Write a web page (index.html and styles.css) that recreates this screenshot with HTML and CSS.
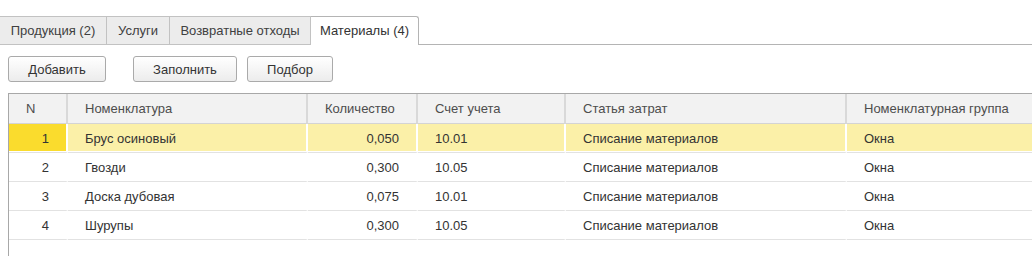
FILE: index.html
```html
<!DOCTYPE html>
<html lang="ru">
<head>
<meta charset="utf-8">
<link rel="stylesheet" href="styles.css">
</head>
<body>
<div class="page">
  <div class="tabs">
    <div class="tab t1">Продукция (2)</div>
    <div class="tab t2">Услуги</div>
    <div class="tab t3">Возвратные отходы</div>
    <div class="tab active t4">Материалы (4)</div>
    <div class="tab-rest"></div>
  </div>
  <div class="toolbar">
    <button class="btn b1">Добавить</button>
    <button class="btn b2">Заполнить</button>
    <button class="btn b3">Подбор</button>
  </div>
  <div class="grid-wrap">
    <table class="grid">
      <colgroup>
        <col class="c-n"><col class="c-nom"><col class="c-qty"><col class="c-acc"><col class="c-cost"><col class="c-grp">
      </colgroup>
      <thead>
        <tr>
          <th class="n">N</th>
          <th>Номенклатура</th>
          <th>Количество</th>
          <th>Счет учета</th>
          <th>Статья затрат</th>
          <th>Номенклатурная группа</th>
        </tr>
      </thead>
      <tbody>
        <tr class="sel">
          <td class="num">1</td><td>Брус осиновый</td><td class="qty">0,050</td><td>10.01</td><td>Списание материалов</td><td>Окна</td>
        </tr>
        <tr>
          <td class="num">2</td><td>Гвозди</td><td class="qty">0,300</td><td>10.05</td><td>Списание материалов</td><td>Окна</td>
        </tr>
        <tr>
          <td class="num">3</td><td>Доска дубовая</td><td class="qty">0,075</td><td>10.01</td><td>Списание материалов</td><td>Окна</td>
        </tr>
        <tr>
          <td class="num">4</td><td>Шурупы</td><td class="qty">0,300</td><td>10.05</td><td>Списание материалов</td><td>Окна</td>
        </tr>
      </tbody>
    </table>
  </div>
</div>
</body>
</html>
```
FILE: styles.css
```css
* { box-sizing: border-box; }
html, body {
  margin: 0;
  padding: 0;
  background: #ffffff;
  overflow: hidden;
}
body {
  width: 1032px;
  height: 256px;
  font-family: "Liberation Sans", Arial, sans-serif;
  font-size: 13px;
  color: #333333;
}
.page {
  display: flex;
  flex-direction: column;
  height: 256px;
}
.tabs {
  display: flex;
  margin-top: 16px;
  height: 29px;
}
.tab {
  height: 29px;
  line-height: 27px;
  text-align: center;
  background: #ececec;
  border: 1px solid #c2c2c2;
  border-left: none;
  color: #404040;
}
.tab.t1 { width: 107px; border-left: none; }
.tab.t2 { width: 63px; }
.tab.t3 { width: 141px; }
.tab.t4 { width: 108px; }
.tab.active {
  background: #ffffff;
  border: 1px solid #b4b4b4;
  border-bottom: none;
  border-left: none;
  border-radius: 0 3px 0 0;
  color: #333333;
}
.tab-rest {
  flex: 1;
  border-bottom: 1px solid #b4b4b4;
}
.toolbar {
  display: flex;
  margin-top: 11px;
  padding-left: 8px;
  height: 26px;
}
.btn {
  height: 26px;
  border: 1px solid #aaaaaa;
  border-radius: 3px;
  background: linear-gradient(#ffffff, #ececec);
  font-family: "Liberation Sans", Arial, sans-serif;
  font-size: 13px;
  color: #333333;
  padding: 0;
  margin: 0;
}
.b1 { width: 98px; }
.b2 { width: 104px; margin-left: 27px; }
.b3 { width: 86px; margin-left: 10px; }
.grid-wrap {
  margin-top: 11px;
  margin-left: 8px;
  flex: 1;
  border-left: 1px solid #a8a8a8;
  border-top: 1px solid #a8a8a8;
  overflow: hidden;
}
.grid {
  border-collapse: separate;
  border-spacing: 0;
  table-layout: fixed;
  width: 1045px;
}
.c-n { width: 59px; }
.c-nom { width: 240px; }
.c-qty { width: 110px; }
.c-acc { width: 148px; }
.c-cost { width: 281px; }
.c-grp { width: 207px; }
.grid th {
  background: #f2f2f2;
  color: #4d4d4d;
  font-weight: normal;
  text-align: left;
  height: 30px;
  padding: 0 17px;
  border-right: 2px solid #d9d9d9;
  border-bottom: 1px solid #d4d4d4;
  white-space: nowrap;
}
.grid td {
  height: 29px;
  padding: 0 17px;
  border-right: 2px solid transparent;
  border-bottom: 1px solid #e2e2e2;
  white-space: nowrap;
}
.grid td.num, .grid td.qty { text-align: right; }
.grid tr.sel td {
  background: #fbf0a8;
  border-right-color: #ffffff;
  border-bottom: 1px solid #e2e2e2;
  box-shadow: inset 0 -1px 0 #ffffff;
}
.grid tr.sel td.num { background: #fadc2d; }
```
